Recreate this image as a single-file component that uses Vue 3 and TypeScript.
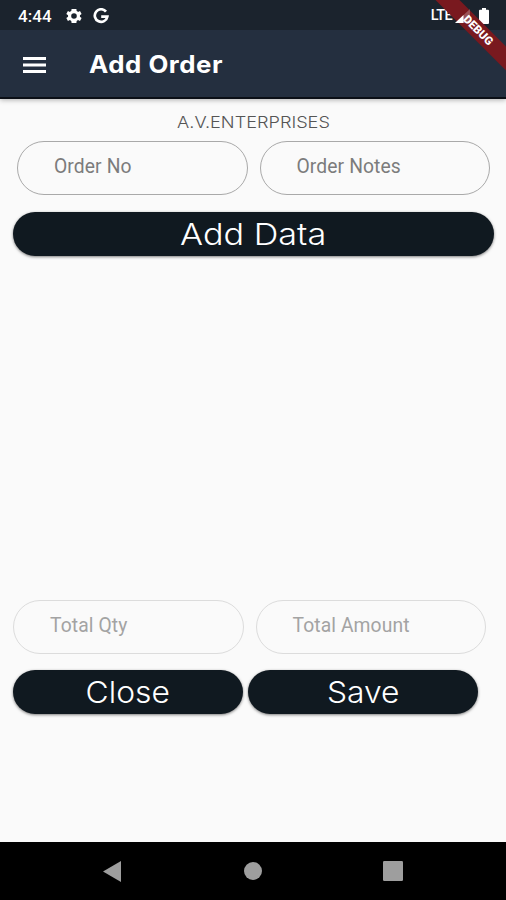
<script setup lang="ts">
interface Field {
  label: string
}

const orderFields: Field[] = [{ label: 'Order No' }, { label: 'Order Notes' }]
const totalFields: Field[] = [{ label: 'Total Qty' }, { label: 'Total Amount' }]
</script>

<template>
  <div class="screen">
    <header class="top">
      <div class="status">
        <span class="clock">4:44</span>
        <svg class="gear" viewBox="2 2 20 20">
          <path fill="#fff" fill-rule="evenodd" d="M19.4 13a7.8 7.8 0 0 0 0-2l2.1-1.6-2-3.5-2.5 1a8 8 0 0 0-1.7-1L15 3.200H9l-.4 2.700a8 8 0 0 0-1.700 1l-2.500-1-2 3.500L4.600 11a7.800 7.800 0 0 0 0 2l-2.200 1.600 2 3.500 2.500-1a8 8 0 0 0 1.700 1L9 20.800h6l.3-2.700a8 8 0 0 0 1.700-1l2.500 1 2-3.500zM12 8.500a3.500 3.500 0 1 1 0 7 3.500 3.500 0 0 1 0-7z" />
        </svg>
        <svg class="google" viewBox="0 0 16 16">
          <path fill="none" stroke="#fff" stroke-width="2.700" d="M13 3.600A6.300 6.300 0 1 0 14.300 8.700H8.200" />
        </svg>
        <span class="network">LTE</span>
        <svg class="signal" viewBox="0 0 15 14">
          <path fill="#fff" fill-opacity="0.25" d="M0 14 15 0V14z" />
          <path fill="#fff" d="M0 14 8.500 6V14z" />
        </svg>
        <svg class="battery" viewBox="0 0 10 16">
          <path fill="#fff" d="M3 0h4v1.700h2a1 1 0 0 1 1 1V15a1 1 0 0 1-1 1H1a1 1 0 0 1-1-1V2.700a1 1 0 0 1 1-1h2z" />
        </svg>
      </div>
      <div class="appbar">
        <svg class="menu" viewBox="0 0 23 16">
          <path fill="#fff" d="M0 0h23v3H0zM0 6.500h23v3H0zM0 13h23V16H0z" />
        </svg>
        <h1 class="title">Add Order</h1>
      </div>
      <div class="ribbon"><span>DEBUG</span></div>
    </header>

    <main class="body">
      <p class="company">A.V.ENTERPRISES</p>
      <div class="fields order">
        <div v-for="f in orderFields" :key="f.label" class="field">{{ f.label }}</div>
      </div>
      <button class="btn add"><span>Add Data</span></button>
      <div class="list"></div>
      <div class="fields totals">
        <div v-for="f in totalFields" :key="f.label" class="field disabled">{{ f.label }}</div>
      </div>
      <div class="actions">
        <button class="btn close"><span>Close</span></button>
        <button class="btn save"><span>Save</span></button>
      </div>
    </main>

    <nav class="navbar">
      <svg class="back" viewBox="0 0 18 21"><path d="M0 10.500 18 0v21z" /></svg>
      <svg class="home" viewBox="0 0 18 18"><circle cx="9" cy="9" r="9" /></svg>
      <svg class="recent" viewBox="0 0 20 20"><rect width="20" height="20" rx="1.200" /></svg>
    </nav>
  </div>
</template>

<style>
body {
  margin: 0;
  background: #fafafa;
}
</style>

<style scoped>
.screen {
  width: 506px;
  height: 900px;
  display: flex;
  flex-direction: column;
  overflow: hidden;
  background: #fafafa;
  font-family: Roboto, sans-serif;
}
.top {
  position: relative;
  height: 99px;
  flex: none;
  box-sizing: border-box;
  background: #242f3f;
  border-bottom: 2px solid #0b0f16;
  box-shadow: 0 1px 5px rgba(0, 0, 0, 0.3);
}
.status {
  display: flex;
  align-items: center;
  height: 30px;
  padding: 1px 17px 0 18px;
  box-sizing: border-box;
  background: #1b232d;
  color: #fff;
}
.clock {
  width: 48px;
  font: 500 17px/30px Roboto, sans-serif;
  letter-spacing: 0.1px;
}
.gear {
  width: 16px;
  height: 16px;
}
.google {
  width: 16px;
  height: 16px;
  margin-left: 11px;
}
.network {
  margin-left: auto;
  font: 500 14.500px/28px Roboto, sans-serif;
  letter-spacing: -0.6px;
}
.signal {
  position: relative;
  z-index: 1;
  width: 15px;
  height: 14px;
  margin-left: 3px;
}
.battery {
  width: 10px;
  height: 16px;
  margin-left: 9px;
}
.appbar {
  display: flex;
  align-items: center;
  height: 67px;
  padding-left: 23px;
}
.menu {
  width: 23px;
  height: 16px;
  margin-top: 3px;
}
.title {
  margin: 3px 0 0 43px;
  color: #fff;
  font: 700 24px/30px Inter, sans-serif;
  letter-spacing: 0.5px;
  transform: scaleX(1.075);
  transform-origin: 0 50%;
}
.ribbon {
  position: absolute;
  top: 0;
  right: 0;
  width: 80px;
  height: 80px;
  overflow: hidden;
}
.ribbon span {
  position: absolute;
  left: -8px;
  top: 22px;
  width: 120px;
  height: 17px;
  transform: rotate(45deg);
  background: #79191f;
  color: #fff;
  text-align: center;
  font: 900 11.500px/17px Roboto, sans-serif;
}
.body {
  flex: 1;
  display: flex;
  flex-direction: column;
  padding: 13px 12px 128px 13px;
}
.company {
  margin: 0;
  height: 20px;
  text-align: center;
  color: #555;
  font: 300 16.500px/20px Inter, sans-serif;
  transform: scaleX(1.1);
}
.fields {
  display: flex;
  gap: 12px;
}
.order {
  padding: 9px 4px 0 4px;
}
.field {
  flex: 1;
  box-sizing: border-box;
  height: 54px;
  padding-left: 36px;
  border: 1px solid #a9a9a9;
  border-radius: 27px;
  color: #7c7c7c;
  font: 400 19.300px/50px Roboto, sans-serif;
  letter-spacing: 0.1px;
}
.totals {
  padding-right: 8px;
}
.disabled {
  border-color: #dcdcdc;
  color: #a3a3a3;
  line-height: 49px;
}
.btn {
  display: block;
  padding: 0;
  height: 44px;
  border: 0;
  border-radius: 22px;
  background: #101920;
  box-shadow: 0 1px 3px rgba(0, 0, 0, 0.5);
  color: #fff;
  text-align: center;
  font: 300 30px/45px Inter, sans-serif;
}
.btn span {
  display: inline-block;
  transform: scaleX(1.06);
}
.add {
  margin-top: 17px;
}
.add span {
  transform: scaleX(1.14);
}
.list {
  flex: 1;
}
.actions {
  display: flex;
  gap: 5px;
  margin-top: 16px;
}
.close,
.save {
  width: 230px;
}
.navbar {
  display: flex;
  align-items: center;
  flex: none;
  height: 58px;
  padding-left: 103px;
  box-sizing: border-box;
  background: #000;
  fill: #9e9e9e;
}
.back {
  width: 18px;
  height: 21px;
}
.home {
  width: 18px;
  height: 18px;
  margin-left: 123px;
}
.recent {
  width: 20px;
  height: 20px;
  margin-left: 120.500px;
}
</style>
